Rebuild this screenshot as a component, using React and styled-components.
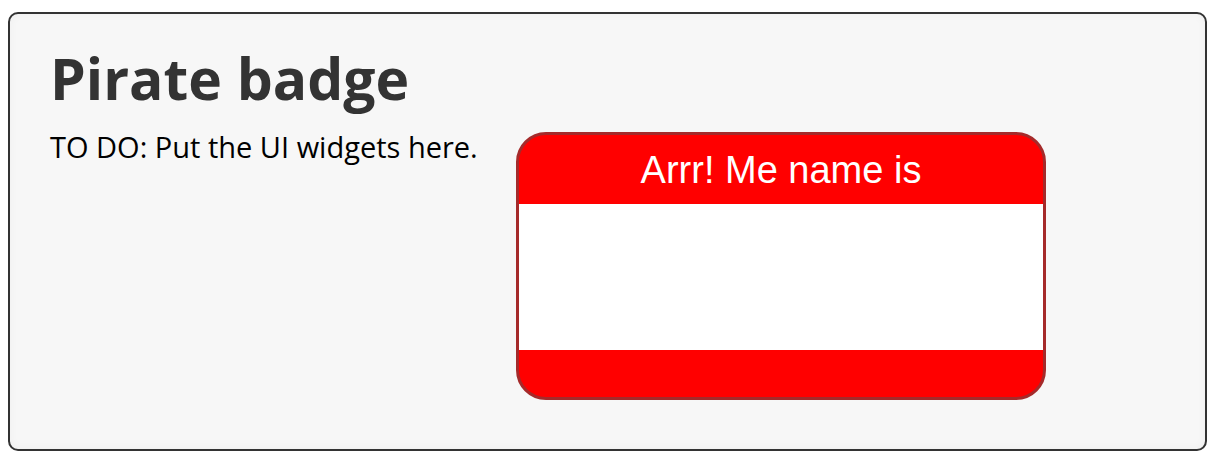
import React from "react";
import styled, { createGlobalStyle } from "styled-components";

const Global = createGlobalStyle`
  html, body { margin: 0; padding: 0; background: #ffffff; }
  body { font-family: "Open Sans", sans-serif; }
`;

const Panel = styled.div`
  box-sizing: border-box;
  margin: 12px 0 0 8px;
  width: 1199px;
  height: 439px;
  border: 2px solid #333333;
  border-radius: 10px;
  background: #f7f7f7;
  box-shadow: inset 0 0 10px rgba(0, 0, 0, 0.035);
  padding: 31px 40px 0 40px;
`;

const Title = styled.h1`
  margin: 0 0 18px 0;
  font-family: "Open Sans", sans-serif;
  font-weight: 700;
  font-size: 57px;
  line-height: 67px;
  color: #333333;
`;

const Row = styled.div`
  display: flex;
  align-items: flex-start;
`;

const Widgets = styled.div`
  width: 466px;
  flex: 0 0 auto;
  font-family: "Open Sans", sans-serif;
  font-size: 29px;
  line-height: 34px;
  color: #000000;
`;

const Badge = styled.div`
  box-sizing: border-box;
  margin-top: 2px;
  width: 530px;
  height: 268px;
  border: 3px solid #a52a2a;
  border-radius: 30px;
  background: #ff0000;
  overflow: hidden;
  display: flex;
  flex-direction: column;
  text-align: center;
`;

const Greeting = styled.div`
  box-sizing: border-box;
  height: 69px;
  padding-top: 16px;
  font-family: "Liberation Sans", Arial, sans-serif;
  font-size: 38px;
  line-height: 38px;
  color: #ffffff;
`;

const Name = styled.div`
  height: 146px;
  background: #ffffff;
  color: #000000;
`;

export default function App() {
  return (
    <>
      <Global />
      <Panel>
        <Title>Pirate badge</Title>
        <Row>
          <Widgets>TO DO: Put the UI widgets here.</Widgets>
          <Badge>
            <Greeting>Arrr! Me name is</Greeting>
            <Name />
          </Badge>
        </Row>
      </Panel>
    </>
  );
}
